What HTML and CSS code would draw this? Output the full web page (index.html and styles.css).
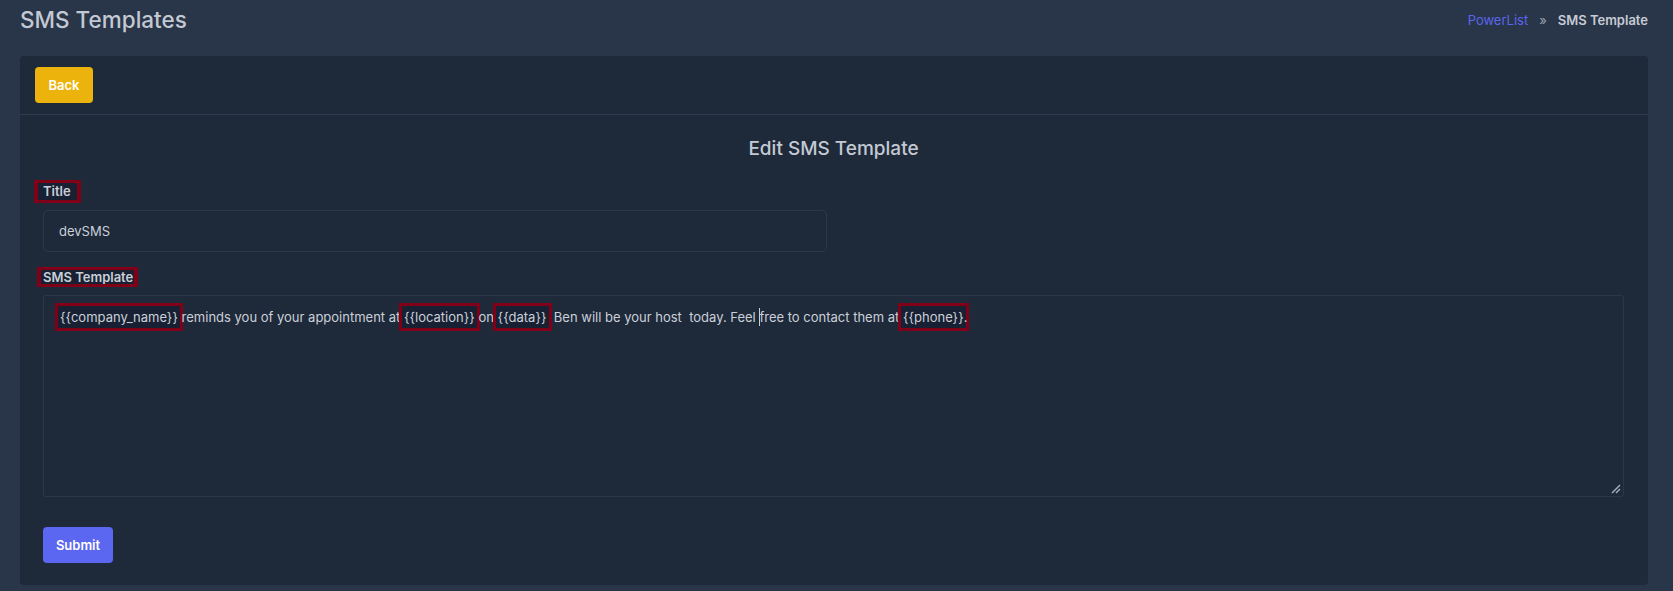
FILE: index.html
```html
<!DOCTYPE html>
<html lang="en">
<head>
<meta charset="utf-8">
<title>SMS Templates</title>
<link rel="stylesheet" href="styles.css">
</head>
<body>
<header class="page-header">
  <h1 class="page-title">SMS Templates</h1>
  <nav class="breadcrumb">
    <a class="crumb-link" href="#">PowerList</a>
    <span class="crumb-sep">»</span>
    <span class="crumb-current">SMS Template</span>
  </nav>
</header>
<main class="card">
  <div class="card-header">
    <button class="btn btn-back" type="button">Back</button>
  </div>
  <div class="card-body">
    <h2 class="form-title">Edit SMS Template</h2>
    <form class="form">
      <div class="field field-title">
        <label class="label label-title"><span class="hl hl-title">Title</span></label>
        <div class="input">devSMS</div>
      </div>
      <div class="field">
        <label class="label label-sms"><span class="hl hl-sms">SMS Template</span></label>
        <div class="textarea"><span class="var">{{company_name}}</span> reminds you of your appointment at <span class="var">{{location}}</span> on <span class="var">{{data}}</span>  Ben will be your host  today. Feel <span class="caret"></span>free to contact them at <span class="var">{{phone}}</span>.<svg class="grip" width="10" height="10" viewBox="0 0 10 10"><path d="M9 1 L1 9 M9 5 L5 9" stroke="#a9b0bb" stroke-width="1.4" fill="none"/></svg></div>
      </div>
      <button class="btn btn-submit" type="button">Submit</button>
    </form>
  </div>
</main>
</body>
</html>
```
FILE: styles.css
```css
* { box-sizing: border-box; }
html, body { margin: 0; padding: 0; }
body {
  background: #293548;
  font-family: Inter, "Noto Sans", "Liberation Sans", sans-serif;
  color: #cbd0d8;
  height: 591px;
  overflow: hidden;
}
.page-header {
  display: flex;
  justify-content: space-between;
  align-items: center;
  height: 40px;
  padding: 0 25px 0 20px;
  margin-bottom: 16px;
}
.page-title {
  margin: 0;
  font-size: 22.5px;
  font-weight: 500;
  color: #c3c9d3;
  line-height: 28px;
}
.breadcrumb {
  display: flex;
  align-items: center;
  gap: 11px;
  font-size: 13px;
  line-height: 18px;
}
.crumb-link { color: #5966ee; text-decoration: none; }
.crumb-sep { color: #9aa3b0; font-size: 13px; }
.crumb-current { color: #c6cbd4; font-weight: 600; }
.card {
  margin: 0 25px 0 20px;
  background: #1e293a;
  border-radius: 4px;
}
.card-header {
  padding: 11px 15px;
  border-bottom: 1px solid #2e3a4d;
}
.btn {
  display: block;
  border: 0;
  border-radius: 4px;
  height: 36px;
  font-family: inherit;
  font-size: 13px;
  font-weight: 600;
  color: #ffffff;
  padding: 0;
  cursor: pointer;
}
.btn-back { width: 58px; background: #ebb30b; }
.btn-submit { width: 70px; background: #5b67f1; margin-top: 30px; }
.card-body { padding: 20px 24px 22px 23px; }
.form-title {
  margin: 0 0 18px;
  text-align: center;
  font-size: 19px;
  font-weight: 500;
  line-height: 27px;
  color: #c3c9d3;
}
.form { display: flex; flex-direction: column; align-items: flex-start; }
.field { width: 100%; }
.field-title { margin-bottom: 15px; }
.label {
  display: flex;
  font-size: 13px;
  font-weight: 600;
  color: #c9ced7;
}
.hl {
  display: block;
  border-style: solid;
  border-color: #7f0017;
  border-width: 3px 4px;
  background: #172133;
  overflow: hidden;
  white-space: nowrap;
}
.hl-title {
  margin-left: -9px;
  padding: 0 6px 0 5px;
  line-height: 17px;
  height: 23px;
  margin-bottom: 7px;
}
.hl-sms {
  margin-left: -6px;
  padding: 0 1px 0 2px;
  line-height: 15px;
  height: 20px;
  margin-bottom: 8px;
}
.input {
  width: 784px;
  height: 42px;
  border: 1px solid #2c3748;
  border-radius: 5px;
  padding: 0 15px;
  font-size: 13px;
  line-height: 40px;
  color: #cbd0d8;
}
.textarea {
  position: relative;
  width: 100%;
  height: 202px;
  border: 1px solid #2c3748;
  border-radius: 3px;
  padding: 11px 16px;
  font-size: 13px;
  line-height: 20px;
  white-space: pre-wrap;
  color: #cbd0d8;
}
.var {
  background: #172133;
  box-shadow: 0 0 0 3px #7f0017;
  padding: 3px 2px;
  margin: 0 -2px;
}
.caret {
  display: inline-block;
  width: 1px;
  height: 18px;
  background: #cbd0d8;
  vertical-align: -4px;
  margin-right: -1px;
}
.grip {
  position: absolute;
  right: 2px;
  bottom: 2px;
}
```
